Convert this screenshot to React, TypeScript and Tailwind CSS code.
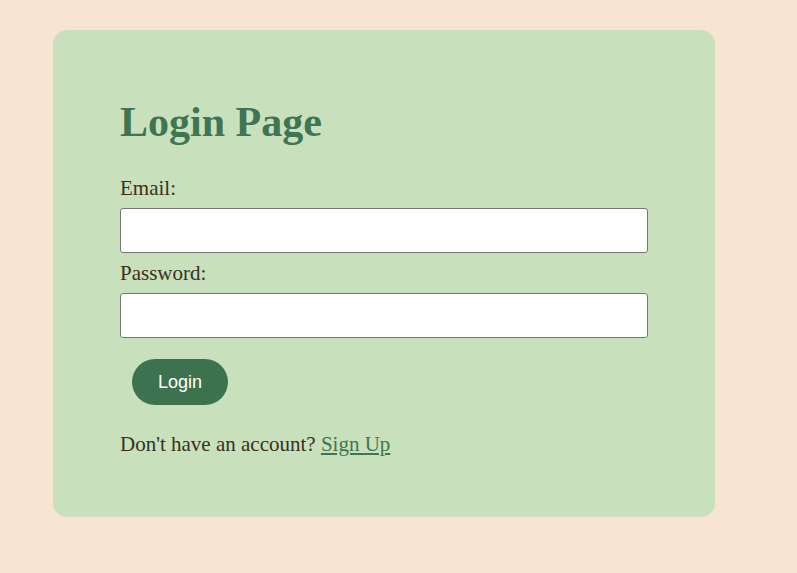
import React from 'react';

export default function App() {
  return (
    <div className="min-h-screen bg-[#f8e4d2] pt-[30px] pl-[53px]" style={{ fontFamily: '"Liberation Serif", "Times New Roman", serif' }}>
      <div className="w-[662px] rounded-[14px] bg-[#c9e0bd] px-[67px] pt-[68px] pb-[61px]">
        <h1 className="text-[42px] font-bold leading-[48px] text-[#3f7552]">Login Page</h1>
        <form className="mt-[30px] flex flex-col" onSubmit={(e) => e.preventDefault()}>
          <label className="text-[21px] leading-[24px] text-[#3a2f22]">Email:</label>
          <input
            type="email"
            className="mt-[8px] h-[45px] w-[528px] rounded-[3px] border border-[#767676] bg-white px-2 outline-none"
          />
          <label className="mt-[8px] text-[21px] leading-[24px] text-[#3a2f22]">Password:</label>
          <input
            type="password"
            className="mt-[8px] h-[45px] w-[528px] rounded-[3px] border border-[#767676] bg-white px-2 outline-none"
          />
          <button
            type="submit"
            className="ml-[12px] mt-[21px] h-[46px] w-[96px] rounded-full bg-[#3d7250] text-[18px] text-white"
            style={{ fontFamily: '"Liberation Sans", Arial, sans-serif' }}
          >
            Login
          </button>
        </form>
        <p className="mt-[27px] text-[21px] leading-[24px] text-[#3a2f22]">
          Don't have an account?{' '}
          <a href="#" className="text-[#3f7552] underline">Sign Up</a>
        </p>
      </div>
    </div>
  );
}
